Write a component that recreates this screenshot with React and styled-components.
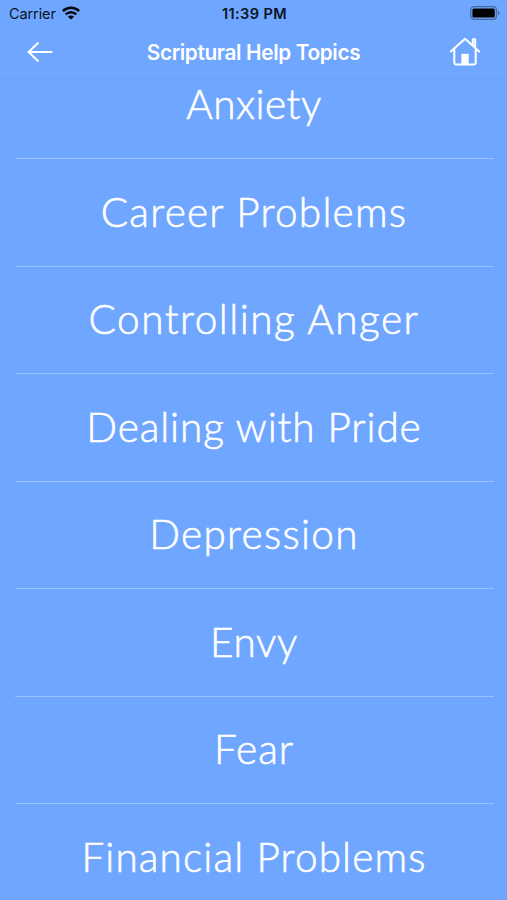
import React from "react";
import styled, { createGlobalStyle } from "styled-components";

const GlobalStyle = createGlobalStyle`
  body {
    margin: 0;
    background-color: #6fa6ff;
  }
`;
const Screen = styled.div`
  width: 507px;
  height: 900px;
  display: flex;
  flex-direction: column;
  overflow: hidden;
  background-color: #6fa6ff;
  font-family: Inter, "Liberation Sans", sans-serif;
`;
const StatusBar = styled.div`
  height: 26px;
  flex: none;
  display: grid;
  grid-template-columns: 1fr auto 1fr;
  align-items: center;
  padding: 0 7px 0 9px;
  box-sizing: border-box;
  color: #0b1424;
`;
const Carrier = styled.div`
  display: flex;
  align-items: center;
  gap: 6px;
  font-size: 14.5px;
  letter-spacing: -0.1px;
`;
const Clock = styled.div`
  font-size: 14.5px;
  font-weight: 600;
  letter-spacing: 0.4px;
`;
const BatterySlot = styled.div`
  display: flex;
  justify-content: flex-end;
`;
const NavBar = styled.div`
  height: 53px;
  flex: none;
  display: grid;
  grid-template-columns: 1fr auto 1fr;
  align-items: center;
  padding: 0 26px;
  box-sizing: border-box;
  border-bottom: 1px solid #699ff6;
`;
const NavTitle = styled.h1`
  margin: 0;
  padding-top: 1px;
  font-size: 20.8px;
  font-weight: 600;
  letter-spacing: -0.36px;
  color: white;
`;
const NavButton = styled.button`
  justify-self: ${(props) => props.$side};
  padding: 0 0 1px;
  border: none;
  background: none;
  display: flex;
  cursor: pointer;
`;
const TopicScroll = styled.div`
  flex: 1;
  min-height: 0;
  overflow: hidden;
`;
const TopicList = styled.ul`
  list-style: none;
  margin: -27.5px 13px 0 15px;
  padding: 0;
`;
const Topic = styled.li`
  height: 107.5px;
  box-sizing: border-box;
  padding: 0 1px 1px 0;
  border-bottom: 1px solid #98c1ff;
  display: flex;
  align-items: center;
  justify-content: center;
  font-family: Lato, "Liberation Sans", sans-serif;
  font-size: 40.5px;
  font-weight: 300;
  line-height: 48px;
  letter-spacing: ${(props) => props.$spacing}px;
  -webkit-text-stroke: 0.6px white;
  white-space: nowrap;
  color: white;
`;

const topics = [
  { name: "Anxiety", spacing: 0.5 },
  { name: "Career Problems", spacing: 1.25 },
  { name: "Controlling Anger", spacing: 1.5 },
  { name: "Dealing with Pride", spacing: 0.9 },
  { name: "Depression", spacing: 1.3 },
  { name: "Envy", spacing: 0.7 },
  { name: "Fear", spacing: 1 },
  { name: "Financial Problems", spacing: 1.15 },
];

function WifiIcon() {
  return (
    <svg width="18" height="14" viewBox="0 0 18 14" fill="none" stroke="#030810" strokeWidth="2.5">
      <path d="M0.9 5.2a11.4 11.4 0 0 1 16.2 0" />
      <path d="M3.7 8.4a7.5 7.5 0 0 1 10.6 0" />
      <path d="M9 13.6L6 10.8a4.2 4.2 0 0 1 6 0z" fill="#030810" stroke="none" />
    </svg>
  );
}

function BatteryIcon() {
  return (
    <svg width="30" height="14" viewBox="0 0 30 14">
      <rect x="0.7" y="0.7" width="25.8" height="12.6" rx="3.4" fill="none" stroke="#456a9f" strokeWidth="1.3" />
      <rect x="2.4" y="2.4" width="22.4" height="9.2" rx="1.6" fill="#000" />
      <path d="M28 4.8c2 .6 2 3.8 0 4.4z" fill="#456a9f" />
    </svg>
  );
}

function BackIcon() {
  return (
    <svg width="28" height="22" viewBox="0 0 28 22" fill="none" stroke="#fff" strokeWidth="2">
      <path d="M12.5 1.5L2.6 11l9.9 9.5M2.8 11H26.3" />
    </svg>
  );
}

function HomeIcon() {
  return (
    <svg width="32" height="30" viewBox="0 0 32 30" fill="none" stroke="#fff" strokeWidth="2" strokeLinecap="round" strokeLinejoin="round">
      <path d="M1.8 14.5L16 1.8 30.2 14.500" />
      <path d="M5.3 12.5V25.800a1.8 1.8 0 0 0 1.8 1.8H24.900a1.8 1.8 0 0 0 1.800-1.8V12.5" />
      <path d="M23.8 7.800V2.200h2.400v8.200" />
      <path d="M12.3 16.800h7.400v10.500h-7.400z" fill="#fff" stroke="none" />
    </svg>
  );
}

function App() {
  return (
    <Screen>
      <GlobalStyle />
      <StatusBar>
        <Carrier>
          Carrier
          <WifiIcon />
        </Carrier>
        <Clock>11:39 PM</Clock>
        <BatterySlot>
          <BatteryIcon />
        </BatterySlot>
      </StatusBar>
      <NavBar>
        <NavButton $side="start" aria-label="Back">
          <BackIcon />
        </NavButton>
        <NavTitle>Scriptural Help Topics</NavTitle>
        <NavButton $side="end" aria-label="Home">
          <HomeIcon />
        </NavButton>
      </NavBar>
      <TopicScroll>
        <TopicList>
          {topics.map((topic) => (
            <Topic key={topic.name} $spacing={topic.spacing}>
              {topic.name}
            </Topic>
          ))}
        </TopicList>
      </TopicScroll>
    </Screen>
  );
}

export default App;
